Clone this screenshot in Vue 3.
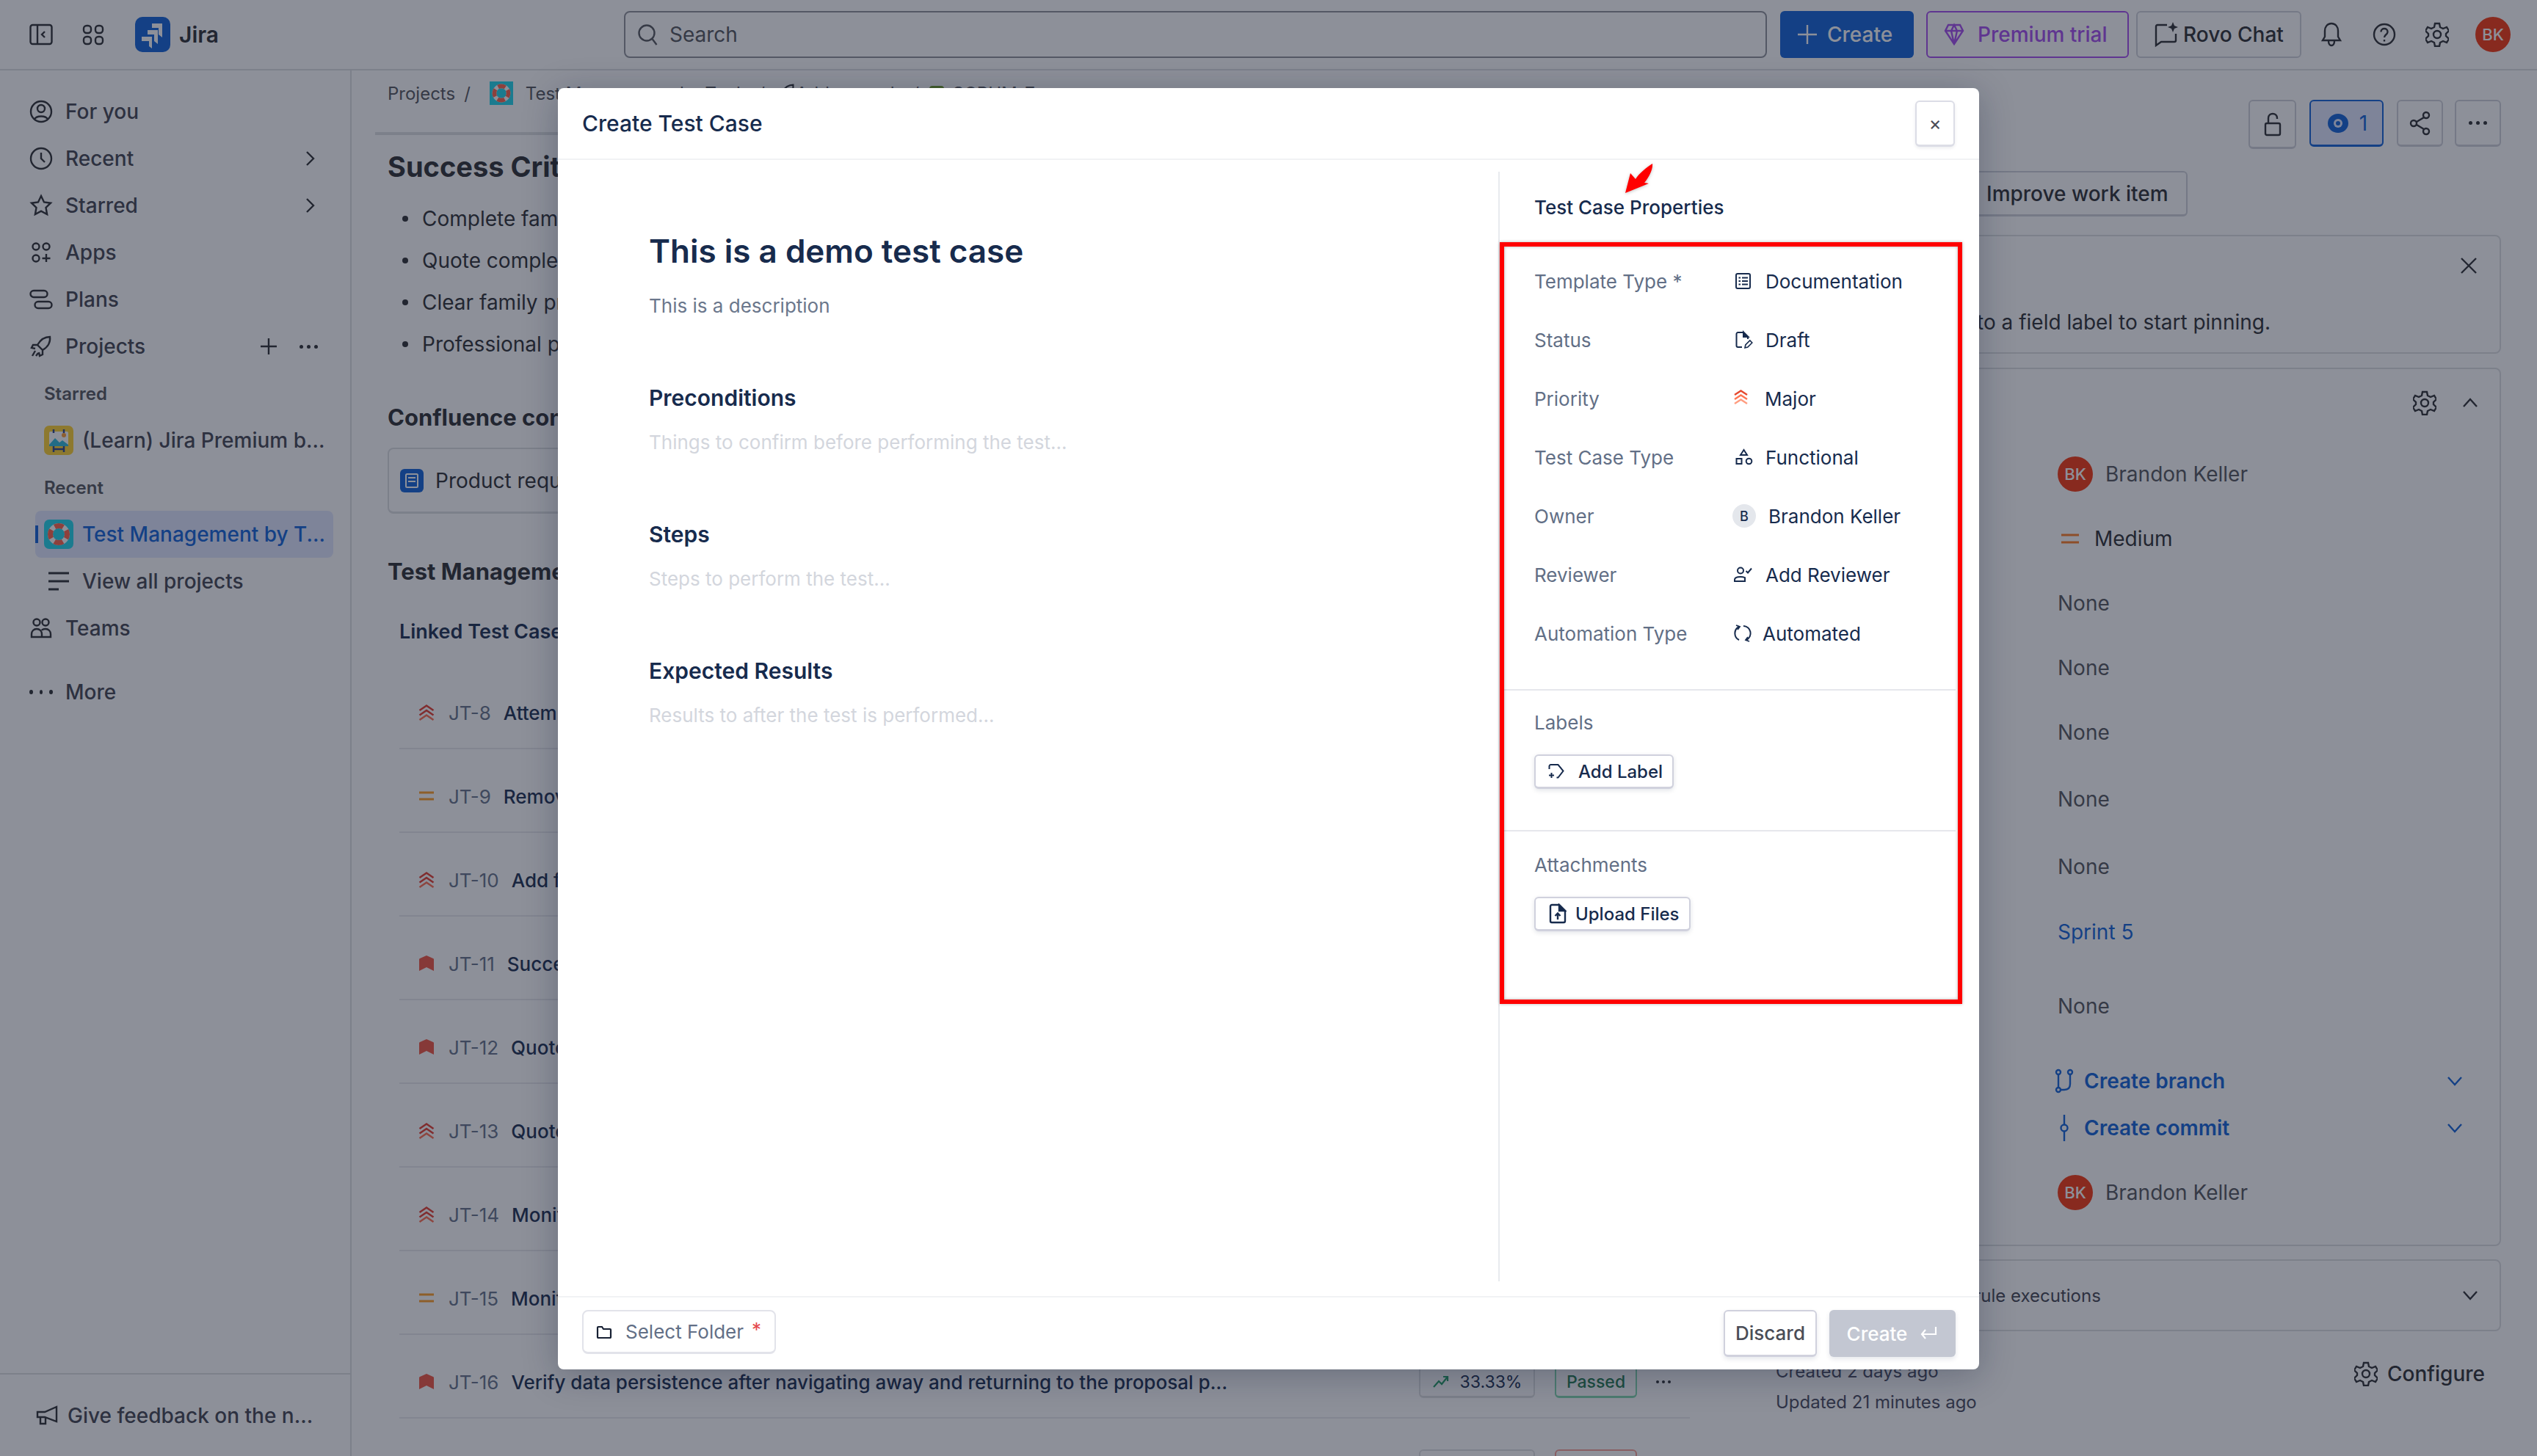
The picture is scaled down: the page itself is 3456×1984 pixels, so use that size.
<script setup>
const circle = (cx, cy, r) => `M${cx - r} ${cy}a${r} ${r} 0 1 0 ${2 * r} 0a${r} ${r} 0 1 0 ${-2 * r} 0z`

const navTop = [
  { label: 'For you', d: circle(16, 16, 14) + circle(16, 12, 5) + 'M7 27c2-6 16-6 18 0' },
  { label: 'Recent', d: circle(16, 16, 14) + 'M16 8v8l5 5', more: true },
  { label: 'Starred', d: 'M16 3l4 8.5 9 1.2-6.5 6.3 1.6 9-8.1-4.3-8.1 4.3 1.6-9L3 12.7l9-1.2z', more: true },
  { label: 'Apps', d: circle(9, 8, 4.5) + circle(23, 8, 4.5) + circle(9, 24, 4.5) + 'M23 18v11M17.5 24h11' },
  { label: 'Plans', d: 'M6 4h14a4 4 0 0 1 0 9H6a4 4 0 0 1 0-9zM12 19h14a4 4 0 0 1 0 9H12a4 4 0 0 1 0-9z' },
  { label: 'Projects', d: 'M28 3c-8 0-13 4-17 11l7 7c7-4 11-9 10-18zM11 14H5l-2 4 5 1M18 21v6l-4 2-1-5M8 22l-4 7M12 25l-3 4', actions: true }
]

const teamsIcon = circle(10, 8, 4.5) + circle(22, 8, 4.5) + 'M3 28v-4c0-4 3-7 7-7s7 3 7 7v4zM17 19c1-2 3-2 5-2 4 0 7 3 7 7v4H17'

const bullets = ['Complete family details', 'Quote completed successfully', 'Clear family profile', 'Professional proposal output']

const cases = [
  { key: 'JT-8', title: 'Attempt to submit without details', p: 'highest' },
  { key: 'JT-9', title: 'Remove a family member', p: 'medium' },
  { key: 'JT-10', title: 'Add family member details', p: 'highest' },
  { key: 'JT-11', title: 'Successful quote creation', p: 'blocker' },
  { key: 'JT-12', title: 'Quote premium calculation', p: 'blocker' },
  { key: 'JT-13', title: 'Quote validation checks', p: 'highest' },
  { key: 'JT-14', title: 'Monitor page load time', p: 'highest' },
  { key: 'JT-15', title: 'Monitor error reporting', p: 'medium' },
  { key: 'JT-16', title: 'Verify data persistence after navigating away and returning to the proposal p...', p: 'blocker' }
]

const detailRows = [
  { h: 88, text: 'Brandon Keller', kind: 'user' },
  { h: 88, text: 'Medium', kind: 'medium' },
  { h: 88, text: 'None', kind: 'none' },
  { h: 88, text: 'None', kind: 'none' },
  { h: 88, text: 'None', kind: 'none' },
  { h: 94, text: 'None', kind: 'none' },
  { h: 90, text: 'None', kind: 'none' },
  { h: 88, text: 'Sprint 5', kind: 'link' },
  { h: 114, text: 'None', kind: 'none' }
]

const fields = [
  { label: 'Template Type *', value: 'Documentation', icon: 'doc', slot: 45 },
  { label: 'Status', value: 'Draft', icon: 'draft', slot: 45 },
  { label: 'Priority', value: 'Major', icon: 'major', slot: 44 },
  { label: 'Test Case Type', value: 'Functional', icon: 'type', slot: 45 },
  { label: 'Owner', value: 'Brandon Keller', icon: 'owner', slot: 49 },
  { label: 'Reviewer', value: 'Add Reviewer', icon: 'reviewer', slot: 45 },
  { label: 'Automation Type', value: 'Automated', icon: 'auto', slot: 41 }
]

const sections = [
  { title: 'Preconditions', hint: 'Things to confirm before performing the test...' },
  { title: 'Steps', hint: 'Steps to perform the test...' },
  { title: 'Expected Results', hint: 'Results to after the test is performed...' }
]
</script>

<template>
  <div class="page">
    <header class="topbar">
      <div class="top-left">
        <svg class="stroke-icon" width="32" height="32" viewBox="0 0 32 32"><rect x="1.5" y="3" width="29" height="26" rx="3"/><path d="M11 3v26M21 12l-4 4 4 4"/></svg>
        <svg class="stroke-icon apps-grid" width="30" height="32" viewBox="0 0 30 32"><rect x="2" y="4" width="10" height="10" rx="4"/><rect x="18" y="4" width="10" height="10" rx="4"/><rect x="2" y="19" width="10" height="10" rx="4"/><rect x="18" y="19" width="10" height="10" rx="4"/></svg>
        <svg class="jira-logo" width="48" height="48" viewBox="0 0 48 48"><rect width="48" height="48" rx="10" fill="#0c5fd6"/><path fill="#fff" d="M23 9h14v19l-5-4v-9h-9zM17 18h14v19l-5-4v-9h-9zM9 27h14v16l-4-3v-7H9z"/></svg>
        <span class="jira-name">Jira</span>
      </div>
      <div class="search">
        <svg class="search-icon" width="30" height="32" viewBox="0 0 30 32"><circle cx="14" cy="14" r="10.5"/><path d="M21.5 22l6 8"/></svg>
        <span>Search</span>
      </div>
      <button class="top-create">
        <svg width="30" height="30" viewBox="0 0 30 30"><path d="M15 2v26M2 15h26" stroke="currentColor" stroke-width="2.4"/></svg>
        Create
      </button>
      <button class="top-premium">
        <svg width="28" height="32" viewBox="0 0 28 32" fill="none" stroke="currentColor" stroke-width="2.4"><path d="M6 3h16l4 8-12 18L2 11zM2 11h24M10 11l4 18 4-18M10 11l4-8 4 8"/></svg>
        Premium trial
      </button>
      <button class="top-rovo">
        <svg class="stroke-icon" width="34" height="36" viewBox="0 0 34 36"><path d="M18 5H5a2 2 0 0 0-2 2v26l7-5h18a2 2 0 0 0 2-2v-9"/><path class="fill-dark" d="M26 1l2 5 5 2-5 2-2 5-2-5-5-2 5-2z"/></svg>
        Rovo Chat
      </button>
      <div class="top-round">
        <svg class="stroke-icon" width="30" height="36" viewBox="0 0 30 36"><path d="M15 3c-6 0-9 5-9 10v8l-3 5h24l-3-5v-8c0-5-3-10-9-10zM11 27c0 8 8 8 8 0"/></svg>
      </div>
      <div class="top-round">
        <svg class="stroke-icon" width="32" height="32" viewBox="0 0 32 32"><circle cx="16" cy="16" r="14"/><path d="M11.5 12.5c0-6 9-6 9 0 0 4-4.500 3.500-4.500 7.500"/><path d="M16 23v2.500"/></svg>
      </div>
      <div class="top-round">
        <svg class="stroke-icon" width="32" height="34" viewBox="0 0 32 34"><path d="M13 2h6l1 5 4 2 5-2 3 5-4 4v3l4 4-3 5-5-2-4 2-1 5h-6l-1-5-4-2-5 2-3-5 4-4v-3l-4-4 3-5 5 2 4-2z"/><circle cx="16" cy="17" r="5"/></svg>
      </div>
      <span class="avatar top-avatar">BK</span>
    </header>

    <div class="workspace">
      <aside class="sidebar">
        <nav class="nav">
          <div v-for="item in navTop" :key="item.label" class="nav-row">
            <svg class="stroke-icon nav-icon" width="32" height="32" viewBox="0 0 32 32"><path :d="item.d"/></svg>
            <span>{{ item.label }}</span>
            <svg v-if="item.more" class="stroke-icon nav-chevron" width="14" height="22" viewBox="0 0 14 22"><path d="M2 2l9 9-9 9"/></svg>
            <div v-if="item.actions" class="nav-actions">
              <svg class="stroke-icon" width="24" height="24" viewBox="0 0 24 24"><path d="M12 1v22M1 12h22"/></svg>
              <span class="mini-dots"><i></i><i></i><i></i></span>
            </div>
          </div>
          <div class="nav-label">Starred</div>
          <div class="nav-row sub">
            <svg class="project-icon" width="40" height="40" viewBox="0 0 40 40">
              <rect width="40" height="40" rx="7" fill="#ffd02a"/>
              <rect x="7" y="8" width="26" height="20" rx="2" fill="#fff"/>
              <path d="M7 26l8-9 6 6 4-3 8 6v2H7z" fill="#29b6d8"/>
              <circle cx="27" cy="13" r="3" fill="#ff9a2e"/>
              <path d="M13 5v5M27 5v5M13 28v8M27 28v8M13 32h14" stroke="#27408b" stroke-width="2.500" fill="none"/>
            </svg>
            <span>(Learn) Jira Premium b...</span>
          </div>
          <div class="nav-label">Recent</div>
          <div class="nav-row sub active">
            <i class="active-bar"></i>
            <svg class="project-icon" width="40" height="40" viewBox="0 0 40 40">
              <rect width="40" height="40" rx="7" fill="#1bd4ea"/>
              <circle cx="20" cy="20" r="11.500" fill="none" stroke="#fff" stroke-width="7"/>
              <circle cx="20" cy="20" r="11.500" fill="none" stroke="#ff5f45" stroke-width="7" stroke-dasharray="12 6.060" stroke-dashoffset="6"/>
            </svg>
            <span>Test Management by T...</span>
          </div>
          <div class="nav-row sub">
            <svg class="stroke-icon view-all" width="40" height="32" viewBox="0 0 40 32"><path d="M6 5h28M6 16h28M6 27h14"/></svg>
            <span>View all projects</span>
          </div>
          <div class="nav-row">
            <svg class="stroke-icon nav-icon" width="32" height="32" viewBox="0 0 32 32"><path :d="teamsIcon"/></svg>
            <span>Teams</span>
          </div>
          <div class="nav-row more-row">
            <span class="more-dots"><i></i><i></i><i></i></span>
            <span>More</span>
          </div>
        </nav>
        <div class="side-foot">
          <svg class="stroke-icon" width="30" height="28" viewBox="0 0 30 28"><path d="M2 9h10L28 2v20L12 16H2zM6 16v9h7v-8"/></svg>
          <span>Give feedback on the n...</span>
        </div>
      </aside>

      <main class="content">
        <div class="crumbs">
          <span>Projects</span><span class="slash">/</span>
          <svg class="crumb-project" width="32" height="32" viewBox="0 0 40 40">
            <rect width="40" height="40" fill="#1bd4ea"/>
            <circle cx="20" cy="20" r="12" fill="none" stroke="#fff" stroke-width="7"/>
            <circle cx="20" cy="20" r="12" fill="none" stroke="#ff5f45" stroke-width="7" stroke-dasharray="12.800 6" stroke-dashoffset="6"/>
          </svg>
          <span>Test Management by Tools</span><span class="slash">/</span>
          <svg class="stroke-icon" width="28" height="28" viewBox="0 0 32 32"><path d="M28 3c-8 0-13 4-17 11l7 7c7-4 11-9 10-18z"/></svg>
          <span>Add-on tools</span><span class="slash">/</span>
          <span class="crumb-green"></span>
          <span>SCRUM-7</span>
        </div>
        <div class="scroll-line"></div>

        <h2 class="h-large">Success Criteria</h2>
        <ul class="bullets">
          <li v-for="b in bullets" :key="b">{{ b }}</li>
        </ul>

        <h3 class="h-mid confluence">Confluence content</h3>
        <div class="conf-card">
          <svg width="32" height="32" viewBox="0 0 32 32"><rect width="32" height="32" rx="6" fill="#0c5fd6"/><rect x="8" y="7" width="16" height="18" rx="1.500" fill="none" stroke="#fff" stroke-width="2"/><path d="M11 12h10M11 17h10" stroke="#fff" stroke-width="2"/></svg>
          <span>Product requirements</span>
        </div>

        <h3 class="h-mid tm">Test Management</h3>
        <div class="linked">Linked Test Cases</div>

        <div class="case-list">
          <div v-for="c in cases" :key="c.key" class="case-row">
            <svg v-if="c.p === 'highest'" class="prio" width="22" height="24" viewBox="0 0 22 24" fill="none" stroke="#e5382b" stroke-width="2.600"><path d="M1.500 9L11 2.500 20.500 9M1.500 15.500L11 9l9.500 6.500"/><path d="M1.500 22L11 15.500 20.500 22" stroke="#ff6a4d"/></svg>
            <svg v-else-if="c.p === 'medium'" class="prio" width="22" height="24" viewBox="0 0 22 24"><path d="M1 7h20M1 16h20" stroke="#ff9a1f" stroke-width="3"/></svg>
            <svg v-else class="prio" width="22" height="24" viewBox="0 0 22 24"><path d="M11 1l9 4a1.500 1.500 0 0 1 1 1.500V22l-10-5-10 5V6.500A1.500 1.500 0 0 1 2 5z" fill="#f0503c"/></svg>
            <span class="case-key">{{ c.key }}</span>
            <span class="case-title">{{ c.title }}</span>
            <span class="chip chip-rate">
              <svg width="24" height="20" viewBox="0 0 24 20" fill="none" stroke="#1f9d62" stroke-width="2.200"><path d="M2 17l7-8 4 4 8-10M15 3h6v6"/></svg>
              33.33%
            </span>
            <span class="chip chip-state">Passed</span>
            <span class="case-dots"><i></i><i></i><i></i></span>
          </div>
          <!-- next row only peeks in at the bottom edge -->
          <div class="case-row tail">
            <span class="chip chip-rate"></span>
            <span class="chip chip-state failed"></span>
            <span class="case-dots"></span>
          </div>
        </div>
      </main>

      <section class="panel">
        <div class="panel-actions">
          <button class="tool tool-lock">
            <svg class="stroke-icon" width="26" height="34" viewBox="0 0 26 34"><rect x="3" y="16" width="20" height="16" rx="2"/><path d="M7 16V9c0-8 12-8 12 0v1"/></svg>
          </button>
          <button class="tool tool-eye">
            <svg width="34" height="30" viewBox="0 0 34 30"><ellipse cx="17" cy="15" rx="14" ry="13" fill="#0c5fd6"/><circle cx="17" cy="15" r="6" fill="#e1e7fe"/><circle cx="17" cy="15" r="3" fill="#0c5fd6"/></svg>
            <span>1</span>
          </button>
          <button class="tool tool-share">
            <svg class="stroke-icon" width="30" height="34" viewBox="0 0 30 34"><circle cx="23" cy="6" r="4"/><circle cx="6" cy="17" r="4"/><circle cx="23" cy="28" r="4"/><path d="M10 15l10-6M10 19l10 6"/></svg>
          </button>
          <button class="tool tool-more"><span class="mini-dots"><i></i><i></i><i></i></span></button>
        </div>

        <button class="improve">
          <svg class="stroke-icon" width="26" height="26" viewBox="0 0 26 26"><path d="M13 2l3 8 8 3-8 3-3 8-3-8-8-3 8-3z"/></svg>
          Improve work item
        </button>

        <div class="box pin-box">
          <svg class="stroke-icon pin-close" width="24" height="24" viewBox="0 0 24 24"><path d="M2 2l20 20M22 2L2 22"/></svg>
          <p class="pin-text"><span>Click the pin next to a field label to start pinning.</span></p>
        </div>

        <div class="box details">
          <div class="details-head">
            <svg class="stroke-icon" width="32" height="34" viewBox="0 0 32 34"><path d="M13 2h6l1 5 4 2 5-2 3 5-4 4v3l4 4-3 5-5-2-4 2-1 5h-6l-1-5-4-2-5 2-3-5 4-4v-3l-4-4 3-5 5 2 4-2z"/><circle cx="16" cy="17" r="5"/></svg>
            <svg class="stroke-icon head-chevron" width="24" height="16" viewBox="0 0 24 16"><path d="M3 13L12 3l9 10"/></svg>
          </div>
          <div
            v-for="(row, i) in detailRows"
            :key="i"
            class="detail-row"
            :class="row.kind"
            :style="{ height: row.h + 'px' }"
          >
            <span v-if="row.kind === 'user'" class="avatar">BK</span>
            <svg v-if="row.kind === 'medium'" class="medium-icon" width="26" height="20" viewBox="0 0 26 20"><path d="M1 5h24M1 15h24" stroke="#ff7a1f" stroke-width="3"/></svg>
            <span>{{ row.text }}</span>
          </div>
          <div class="dev-row">
            <svg class="blue-icon" width="26" height="34" viewBox="0 0 26 34"><circle cx="5" cy="5" r="3"/><circle cx="21" cy="5" r="3"/><circle cx="5" cy="29" r="3"/><path d="M5 8v18M21 8v13c0 5-3 8-8 8H8"/></svg>
            <span>Create branch</span>
            <svg class="blue-chevron" width="22" height="14" viewBox="0 0 22 14"><path d="M2 2l9 10 9-10"/></svg>
          </div>
          <div class="dev-row">
            <svg class="blue-icon" width="26" height="38" viewBox="0 0 26 38"><circle cx="13" cy="19" r="4.500"/><path d="M13 1v13M13 24v13"/></svg>
            <span>Create commit</span>
            <svg class="blue-chevron" width="22" height="14" viewBox="0 0 22 14"><path d="M2 2l9 10 9-10"/></svg>
          </div>
          <div class="detail-row user reporter">
            <span class="avatar">BK</span>
            <span>Brandon Keller</span>
          </div>
        </div>

        <div class="box rules">
          <span class="rules-text">Automation rule executions</span>
          <svg class="stroke-icon" width="22" height="14" viewBox="0 0 22 14"><path d="M2 2l9 10 9-10"/></svg>
        </div>

        <div class="panel-foot">
          <div class="stamps">
            <div>Created 2 days ago</div>
            <div>Updated 21 minutes ago</div>
          </div>
          <div class="configure">
            <svg class="stroke-icon" width="32" height="34" viewBox="0 0 32 34"><path d="M13 2h6l1 5 4 2 5-2 3 5-4 4v3l4 4-3 5-5-2-4 2-1 5h-6l-1-5-4-2-5 2-3-5 4-4v-3l-4-4 3-5 5 2 4-2z"/><circle cx="16" cy="17" r="5"/></svg>
            <span>Configure</span>
          </div>
        </div>
      </section>
    </div>

    <div class="overlay"></div>

    <div class="modal">
      <div class="modal-head">
        <span>Create Test Case</span>
        <button class="modal-close">×</button>
      </div>

      <div class="modal-body">
        <div class="editor">
          <h1>This is a demo test case</h1>
          <p class="desc">This is a description</p>
          <div v-for="s in sections" :key="s.title" class="editor-section">
            <h4>{{ s.title }}</h4>
            <p>{{ s.hint }}</p>
          </div>
        </div>

        <div class="props">
          <div class="props-title">Test Case Properties</div>
          <div class="fields">
            <div v-for="f in fields" :key="f.label" class="field">
              <span class="field-label">{{ f.label }}</span>
              <span class="field-slot" :style="{ width: f.slot + 'px' }">
                <span v-if="f.icon === 'owner'" class="owner-badge">B</span>
                <svg v-else width="28" height="28" viewBox="0 0 28 28" fill="none" stroke="#172b4d" stroke-width="2">
                  <template v-if="f.icon === 'doc'">
                    <rect x="5" y="4" width="19" height="20" rx="2"/>
                    <path d="M8.500 9.500h2.500M8.500 14h2.500M8.500 18.500h2.500M13 9.500h8M13 14h8M13 18.500h8"/>
                  </template>
                  <template v-else-if="f.icon === 'draft'">
                    <path d="M15 4H7.500A2 2 0 0 0 5.500 6v16a2 2 0 0 0 2 2H13M21 10v3"/>
                    <path d="M15 3.500l6.500 6.500H15z" fill="#172b4d"/>
                    <path d="M17 25l.8-4 6-6 3 3-6 6z" stroke-width="1.600"/>
                  </template>
                  <template v-else-if="f.icon === 'major'">
                    <path d="M3 9l8.500-5.500L20 9" stroke="#e5492f" stroke-width="2.400"/>
                    <path d="M3 15l8.500-5.500L20 15" stroke="#ff7452" stroke-width="2.400"/>
                    <path d="M3 21l8.500-5.500L20 21" stroke="#ff9d80" stroke-width="2.400"/>
                  </template>
                  <template v-else-if="f.icon === 'type'">
                    <path d="M15.500 4l4.500 7h-9z"/>
                    <rect x="5.500" y="16" width="7" height="7"/>
                    <circle cx="22.500" cy="19.500" r="3.800"/>
                  </template>
                  <template v-else-if="f.icon === 'reviewer'">
                    <circle cx="11" cy="8.500" r="4"/>
                    <path d="M3 23v-2c0-2.500 3.500-4 8-4 2.500 0 4.500.5 6 1.200V23z"/>
                    <path d="M18.500 9l2.500 2.500 5-6"/>
                  </template>
                  <template v-else>
                    <path d="M9 5A10 10 0 0 0 9 23M19 23A10 10 0 0 0 15 4"/>
                    <path d="M5 3l5 2-3 4M23 25l-5-2 3-4" stroke-width="1.800"/>
                  </template>
                </svg>
              </span>
              <span class="field-value">{{ f.value }}</span>
            </div>
          </div>

          <div class="props-block labels">
            <div class="block-label">Labels</div>
            <button class="small-btn add-label">
              <svg width="24" height="24" viewBox="0 0 24 24" fill="none" stroke="#172b4d" stroke-width="2"><path d="M2.500 9V5a2 2 0 0 1 2-2h10l7 8.500-7 9h-2M5.500 14v7M2 17.500h7"/></svg>
              Add Label
            </button>
          </div>
          <div class="props-block attachments">
            <div class="block-label">Attachments</div>
            <button class="small-btn upload">
              <svg width="24" height="28" viewBox="0 0 24 28" fill="none" stroke="#172b4d" stroke-width="2.400"><path d="M14 2H4a2 2 0 0 0-2 2v20a2 2 0 0 0 2 2h16a2 2 0 0 0 2-2V10z"/><path d="M14 2l8 8h-8z" fill="#172b4d"/><path d="M12 22v-8M8.500 17l3.500-3.500 3.500 3.500"/></svg>
              Upload Files
            </button>
          </div>

          <div class="red-frame"></div>
        </div>
      </div>

      <svg class="red-arrow" width="40" height="42" viewBox="0 0 40 42"><path d="M38 1c1 7-5 19-11 26l6 1L1 41l7-27 7 8c5-8 15-16 23-21z" fill="#f00"/></svg>

      <div class="modal-foot">
        <div class="folder">
          <svg width="22" height="18" viewBox="0 0 22 18" fill="none" stroke="#172033" stroke-width="2.200"><path d="M2 3a1 1 0 0 1 1-1h5l2 3h9a1 1 0 0 1 1 1v10a1 1 0 0 1-1 1H3a1 1 0 0 1-1-1z"/></svg>
          <span>Select Folder</span>
          <em>*</em>
        </div>
        <button class="discard">Discard</button>
        <button class="create">
          Create
          <svg width="26" height="22" viewBox="0 0 26 22" fill="none" stroke="#fff" stroke-width="2.200"><path d="M23 2v10H4M9 6l-5 6 5 6"/></svg>
        </button>
      </div>
    </div>
  </div>
</template>

<style scoped>
.page {
  width: 3456px;
  height: 1984px;
  position: relative;
  overflow: hidden;
  background: #fff;
  color: #292a2e;
  font-family: Inter, "Liberation Sans", sans-serif;
  font-size: 28px;
}

button {
  font-family: inherit;
  cursor: default;
}

h1, h2, h3, h4, p, ul {
  margin: 0;
  padding: 0;
}

.stroke-icon {
  fill: none;
  stroke: #292a2e;
  stroke-width: 2.400;
  flex-shrink: 0;
}

.stroke-icon .fill-dark {
  fill: #292a2e;
  stroke: none;
}

/* top bar */
.topbar {
  height: 96px;
  box-sizing: border-box;
  display: flex;
  align-items: center;
  border-bottom: 2px solid #dddee1;
  padding-right: 36px;
}

.top-left {
  width: 850px;
  padding-left: 40px;
  box-sizing: border-box;
  display: flex;
  align-items: center;
  flex-shrink: 0;
}

.apps-grid {
  margin-left: 40px;
}

.jira-logo {
  margin-left: 42px;
}

.jira-name {
  margin-left: 12px;
  font-size: 30px;
  font-weight: 600;
}

.search {
  flex: 1;
  height: 64px;
  box-sizing: border-box;
  border: 2px solid #8c8f97;
  border-radius: 8px;
  display: flex;
  align-items: center;
  padding-left: 15px;
  gap: 15px;
  color: #505258;
}

.search-icon {
  fill: none;
  stroke: #505258;
  stroke-width: 2.400;
}

.top-create,
.top-premium,
.top-rovo {
  height: 64px;
  box-sizing: border-box;
  border-radius: 6px;
  display: flex;
  align-items: center;
  font-size: 28px;
  font-weight: 500;
  flex-shrink: 0;
}

.top-create {
  margin-left: 18px;
  width: 182px;
  border: none;
  background: #0c5fd6;
  color: #fff;
  padding: 0 0 0 22px;
  gap: 12px;
}

.top-premium {
  margin-left: 17px;
  width: 276px;
  border: 2px solid #a349ed;
  background: #fff;
  color: #a349ed;
  padding: 0 0 0 22px;
  gap: 18px;
}

.top-rovo {
  margin-left: 10px;
  width: 225px;
  border: 2px solid #cfd1d9;
  background: #fff;
  color: #292a2e;
  padding: 0 0 0 22px;
  gap: 6px;
}

.top-round {
  width: 72px;
  display: flex;
  justify-content: center;
  flex-shrink: 0;
}

.top-rovo + .top-round {
  margin-left: 5px;
}

.avatar {
  width: 48px;
  height: 48px;
  border-radius: 50%;
  background: #f5330a;
  color: #fff;
  font-size: 22px;
  font-weight: 500;
  display: inline-flex;
  align-items: center;
  justify-content: center;
  flex-shrink: 0;
}

.top-avatar {
  margin-left: 16px;
}

/* columns */
.workspace {
  display: flex;
  height: 1888px;
}

.sidebar {
  width: 479px;
  flex-shrink: 0;
  box-sizing: border-box;
  border-right: 2px solid #dddee1;
  display: flex;
  flex-direction: column;
  font-weight: 500;
}

.nav {
  padding-top: 24px;
}

.nav-row {
  height: 64px;
  display: flex;
  align-items: center;
  padding-left: 40px;
  position: relative;
  color: #3f414d;
}

.nav-icon {
  margin-right: 17px;
}

.nav-chevron {
  position: absolute;
  left: 416px;
}

.nav-actions {
  position: absolute;
  left: 354px;
  display: flex;
  align-items: center;
  gap: 30px;
}

.mini-dots,
.more-dots,
.case-dots {
  display: inline-flex;
  gap: 5px;
}

.mini-dots i,
.more-dots i,
.case-dots i {
  width: 5px;
  height: 5px;
  border-radius: 50%;
  background: #292a2e;
}

.more-dots {
  gap: 9px;
  margin-right: 17px;
  width: 32px;
}

.more-dots i {
  width: 6px;
  height: 6px;
}

.nav-label {
  height: 64px;
  padding-left: 60px;
  display: flex;
  align-items: center;
  font-size: 24px;
  font-weight: 600;
  color: #505258;
}

.nav-row.sub {
  padding-left: 60px;
  gap: 12px;
}

.project-icon {
  flex-shrink: 0;
}

.view-all {
  stroke-width: 3;
}

.nav-row.active {
  margin-left: 48px;
  width: 406px;
  padding-left: 12px;
  box-sizing: border-box;
  border-radius: 8px;
  background: #e1e7fe;
  color: #0c5fd6;
}

.active-bar {
  position: absolute;
  left: 0;
  top: 20px;
  width: 4px;
  height: 24px;
  background: #0c5fd6;
}

.more-row {
  margin-top: 23px;
}

.side-foot {
  margin-top: auto;
  height: 113px;
  box-sizing: border-box;
  border-top: 2px solid #dddee1;
  display: flex;
  align-items: center;
  padding-left: 49px;
  gap: 13px;
  color: #3f414d;
}

/* main column */
.content {
  width: 1940px;
  flex-shrink: 0;
  padding-left: 49px;
  box-sizing: border-box;
}

.crumbs {
  height: 40px;
  margin-top: 11px;
  display: flex;
  align-items: center;
  font-size: 24px;
  color: #505258;
  white-space: nowrap;
}

.slash {
  margin: 0 14px 0 12px;
}

.crumb-project {
  margin: 0 17px 0 12px;
}

.crumb-green {
  width: 20px;
  height: 20px;
  border: 3px solid #6a9a23;
  border-radius: 4px;
  box-sizing: border-box;
  margin-right: 12px;
}

.scroll-line {
  margin: 33px 117px 0 -17px;
  height: 4px;
  background: #dddee1;
}

.h-large {
  margin-top: 19px;
  font-size: 38px;
  line-height: 48px;
  font-weight: 700;
  color: #292a2e;
}

.bullets {
  margin-top: 18px;
  list-style: none;
}

.bullets li {
  height: 57px;
  display: flex;
  align-items: center;
  padding-left: 47px;
  position: relative;
}

.bullets li::before {
  content: "";
  position: absolute;
  left: 20px;
  width: 8px;
  height: 8px;
  border-radius: 50%;
  background: #292a2e;
}

.h-mid {
  font-size: 31px;
  line-height: 40px;
  font-weight: 700;
}

.confluence {
  margin-top: 52px;
}

.conf-card {
  margin-top: 21px;
  height: 90px;
  width: 800px;
  box-sizing: border-box;
  border: 2px solid #dddee1;
  border-bottom-width: 3px;
  border-radius: 8px;
  display: flex;
  align-items: center;
  padding-left: 15px;
  gap: 16px;
}

.tm {
  margin-top: 59px;
}

.linked {
  margin: 45px 0 0 16px;
  height: 34px;
  line-height: 34px;
  font-weight: 600;
  font-size: 27px;
  color: #172b4d;
}

.case-list {
  margin: 29px 117px 0 16px;
}

.case-row {
  height: 114px;
  box-sizing: border-box;
  padding: 16px 0 0 26px;
  border-bottom: 2px solid #e8e9ed;
  display: flex;
  align-items: center;
  font-size: 26px;
  white-space: nowrap;
}

.prio {
  flex-shrink: 0;
}

.case-key {
  margin-left: 19px;
  color: #626f86;
}

.case-title {
  margin-left: 17px;
  font-weight: 500;
  color: #172b4d;
}

.chip {
  height: 44px;
  box-sizing: border-box;
  border: 2px solid #dddee1;
  border-bottom-width: 3px;
  border-radius: 6px;
  display: flex;
  align-items: center;
  justify-content: center;
  font-size: 23px;
}

.chip-rate {
  margin-left: auto;
  width: 158px;
  gap: 14px;
  color: #172b4d;
}

.chip-state {
  margin-left: 27px;
  width: 112px;
  border-color: #7fd6ad;
  color: #1f7a4d;
  font-weight: 500;
}

.chip-state.failed {
  border-color: #f59c93;
}

.case-dots {
  width: 72px;
  justify-content: center;
  gap: 4px;
}

.case-dots i {
  width: 4px;
  height: 4px;
}

/* right panel */
.panel {
  width: 988px;
  flex-shrink: 0;
  white-space: nowrap;
}

.panel-actions {
  margin-top: 40px;
  display: flex;
  justify-content: flex-end;
  align-items: flex-start;
}

.tool {
  height: 64px;
  box-sizing: border-box;
  background: #fff;
  border: 2px solid #cfd1d9;
  border-bottom-width: 3px;
  border-radius: 6px;
  display: flex;
  align-items: center;
  justify-content: center;
  padding: 0;
}

.tool-lock {
  width: 65px;
  height: 67px;
}

.tool-eye {
  width: 101px;
  margin-left: 18px;
  gap: 12px;
  background: #e1e7fe;
  border-color: #0c5fd6;
  color: #0c5fd6;
  font-size: 28px;
}

.tool-share {
  width: 63px;
  margin-left: 18px;
}

.tool-more {
  width: 63px;
  margin-left: 16px;
}

.improve {
  margin: 30px 0 0 211px;
  height: 62px;
  box-sizing: border-box;
  display: flex;
  align-items: center;
  gap: 24px;
  padding: 0 24px;
  background: #fff;
  border: 2px solid #cfd1d9;
  border-bottom-width: 3px;
  border-radius: 6px;
  font-size: 28px;
  font-weight: 500;
  color: #292a2e;
}

.box {
  box-sizing: border-box;
  border: 2px solid #dddee1;
  border-radius: 8px;
}

.pin-box {
  margin-top: 25px;
  height: 162px;
  position: relative;
}

.pin-close {
  position: absolute;
  right: 30px;
  top: 28px;
}

.pin-text {
  width: 672px;
  margin-top: 97px;
  display: flex;
  justify-content: flex-end;
  line-height: 40px;
}

.details {
  margin-top: 19px;
  height: 1197px;
  padding-left: 382px;
}

.details-head {
  height: 99px;
  box-sizing: border-box;
  padding: 0 28px 7px 0;
  display: flex;
  align-items: center;
  justify-content: flex-end;
  gap: 34px;
}

.detail-row {
  display: flex;
  align-items: center;
  gap: 17px;
  color: #505258;
}

.detail-row.medium {
  color: #292a2e;
  gap: 20px;
}

.medium-icon {
  margin-left: 4px;
}

.detail-row.link {
  color: #0c5fd6;
}

.dev-row {
  height: 64px;
  display: flex;
  align-items: center;
  font-weight: 600;
  color: #0c5fd6;
  gap: 14px;
  margin-left: -4px;
  position: relative;
}

.detail-row + .dev-row {
  margin-top: 13px;
}

.blue-icon,
.blue-chevron {
  fill: none;
  stroke: #0c5fd6;
  stroke-width: 2.400;
}

.blue-chevron {
  position: absolute;
  left: 534px;
}

.reporter {
  height: 112px;
}

.rules {
  margin-top: 18px;
  height: 98px;
  display: flex;
  align-items: center;
  padding-left: 132px;
  font-size: 24px;
  position: relative;
  color: #3f414d;
}

.rules svg {
  position: absolute;
  left: 933px;
}

.panel-foot {
  margin-top: 34px;
  display: flex;
  justify-content: space-between;
  align-items: flex-start;
  padding-right: 22px;
}

.stamps {
  font-size: 24px;
  line-height: 42px;
  color: #44465a;
}

.configure {
  display: flex;
  align-items: center;
  gap: 13px;
  font-weight: 500;
  height: 48px;
}

/* modal */
.overlay {
  position: absolute;
  inset: 0;
  background: rgba(27, 33, 51, 0.5);
}

.modal {
  position: absolute;
  left: 760px;
  top: 120px;
  width: 1936px;
  height: 1746px;
  background: #fff;
  border-radius: 8px;
  box-shadow: 0 8px 48px rgba(9, 20, 50, 0.28);
  display: flex;
  flex-direction: column;
  color: #172b4d;
}

.modal-head {
  height: 98px;
  box-sizing: border-box;
  flex-shrink: 0;
  border-bottom: 2px solid #f1f2f4;
  display: flex;
  align-items: center;
  justify-content: space-between;
  padding: 0 33px;
  font-size: 30px;
  font-weight: 500;
}

.modal-close {
  width: 54px;
  height: 63px;
  background: #fff;
  border: 2px solid #dcdde6;
  border-bottom-width: 3px;
  border-radius: 6px;
  font-size: 26px;
  color: #4a4d57;
  padding: 0;
  box-shadow: 0 2px 4px rgba(9, 30, 66, 0.08);
}

.modal-body {
  flex: 1;
  min-height: 0;
  display: flex;
  padding: 16px 0 20px;
}

.editor {
  width: 1281px;
  flex-shrink: 0;
  padding: 78px 0 0 124px;
  box-sizing: border-box;
}

.editor h1 {
  font-size: 44px;
  line-height: 60px;
  font-weight: 600;
  color: #172b4d;
}

.desc {
  margin-top: 27px;
  font-size: 26px;
  line-height: 36px;
  color: #6b778c;
}

.editor-section {
  margin-top: 89px;
}

.editor-section h4 {
  font-size: 30px;
  line-height: 36px;
  font-weight: 600;
}

.editor-section p {
  margin-top: 25px;
  font-size: 26px;
  line-height: 36px;
  color: #d3d6dd;
}

.props {
  flex: 1;
  position: relative;
  border-left: 2px solid #e8eaee;
  padding-top: 31px;
  box-sizing: border-box;
}

.props-title {
  padding-left: 47px;
  line-height: 36px;
  font-size: 26px;
  font-weight: 500;
}

.fields {
  margin-top: 42px;
  padding-left: 47px;
}

.field {
  height: 80px;
  display: flex;
  align-items: center;
  font-size: 26px;
}

.field-label {
  width: 270px;
  color: #626f86;
}

.field-slot {
  flex-shrink: 0;
  display: flex;
  align-items: center;
}

.owner-badge {
  width: 32px;
  height: 32px;
  border-radius: 50%;
  background: #e4e7ec;
  font-size: 18px;
  font-weight: 500;
  display: flex;
  align-items: center;
  justify-content: center;
}

.props-block {
  margin-right: 32px;
  padding-left: 47px;
}

.labels {
  margin-top: 36px;
  height: 194px;
  box-sizing: border-box;
  border-top: 2px solid #e6e7ec;
  border-bottom: 2px solid #e6e7ec;
  padding-top: 26px;
}

.block-label {
  font-size: 26px;
  line-height: 36px;
  color: #626f86;
}

.attachments {
  padding-top: 28px;
}

.small-btn {
  margin-top: 25px;
  height: 47px;
  box-sizing: border-box;
  background: #fff;
  border: 2px solid #d0d1dd;
  border-bottom-width: 3px;
  border-radius: 6px;
  display: flex;
  align-items: center;
  font-size: 24px;
  font-weight: 500;
  color: #172b4d;
  box-shadow: 0 2px 6px rgba(9, 30, 66, 0.12);
}

.add-label {
  width: 190px;
  padding: 0 0 0 16px;
  gap: 18px;
}

.upload {
  width: 213px;
  padding: 0 0 0 18px;
  gap: 12px;
}

.red-frame {
  position: absolute;
  left: 0;
  top: 96px;
  width: 630px;
  height: 1038px;
  box-sizing: border-box;
  border: 6px solid #f00;
  box-shadow: 0 0 4px rgba(0, 0, 0, 0.3), inset 0 0 4px rgba(0, 0, 0, 0.3);
}

.red-arrow {
  position: absolute;
  left: 1453px;
  top: 102px;
  filter: drop-shadow(0 1px 2px rgba(0, 0, 0, 0.25));
}

.modal-foot {
  height: 100px;
  flex-shrink: 0;
  box-sizing: border-box;
  border-top: 2px solid #f1f2f4;
  display: flex;
  align-items: center;
  padding: 0 32px 0 33px;
}

.folder {
  width: 264px;
  height: 60px;
  box-sizing: border-box;
  border: 2px solid #e2e3ea;
  border-bottom-width: 3px;
  border-radius: 8px;
  display: flex;
  align-items: center;
  padding-left: 17px;
  gap: 18px;
  color: #626f86;
  font-size: 26px;
  margin-top: -4px;
}

.folder em {
  font-style: normal;
  color: #e5484d;
  margin: -6px 0 0 -7px;
}

.discard,
.create {
  height: 64px;
  box-sizing: border-box;
  border-radius: 6px;
  font-size: 26px;
  font-weight: 500;
  display: flex;
  align-items: center;
  justify-content: center;
  padding: 0;
  box-shadow: 0 3px 6px rgba(9, 30, 66, 0.1);
}

.discard {
  margin-left: auto;
  width: 127px;
  background: #fff;
  border: 2px solid #d0d1dd;
  border-bottom-width: 3px;
  color: #4a4d57;
}

.create {
  margin-left: 17px;
  width: 172px;
  background: #c3c7d2;
  border: none;
  color: #fff;
  gap: 16px;
}
</style>

<style>
html, body {
  margin: 0;
  width: 3456px;
  height: 1984px;
  overflow: hidden;
}
</style>
